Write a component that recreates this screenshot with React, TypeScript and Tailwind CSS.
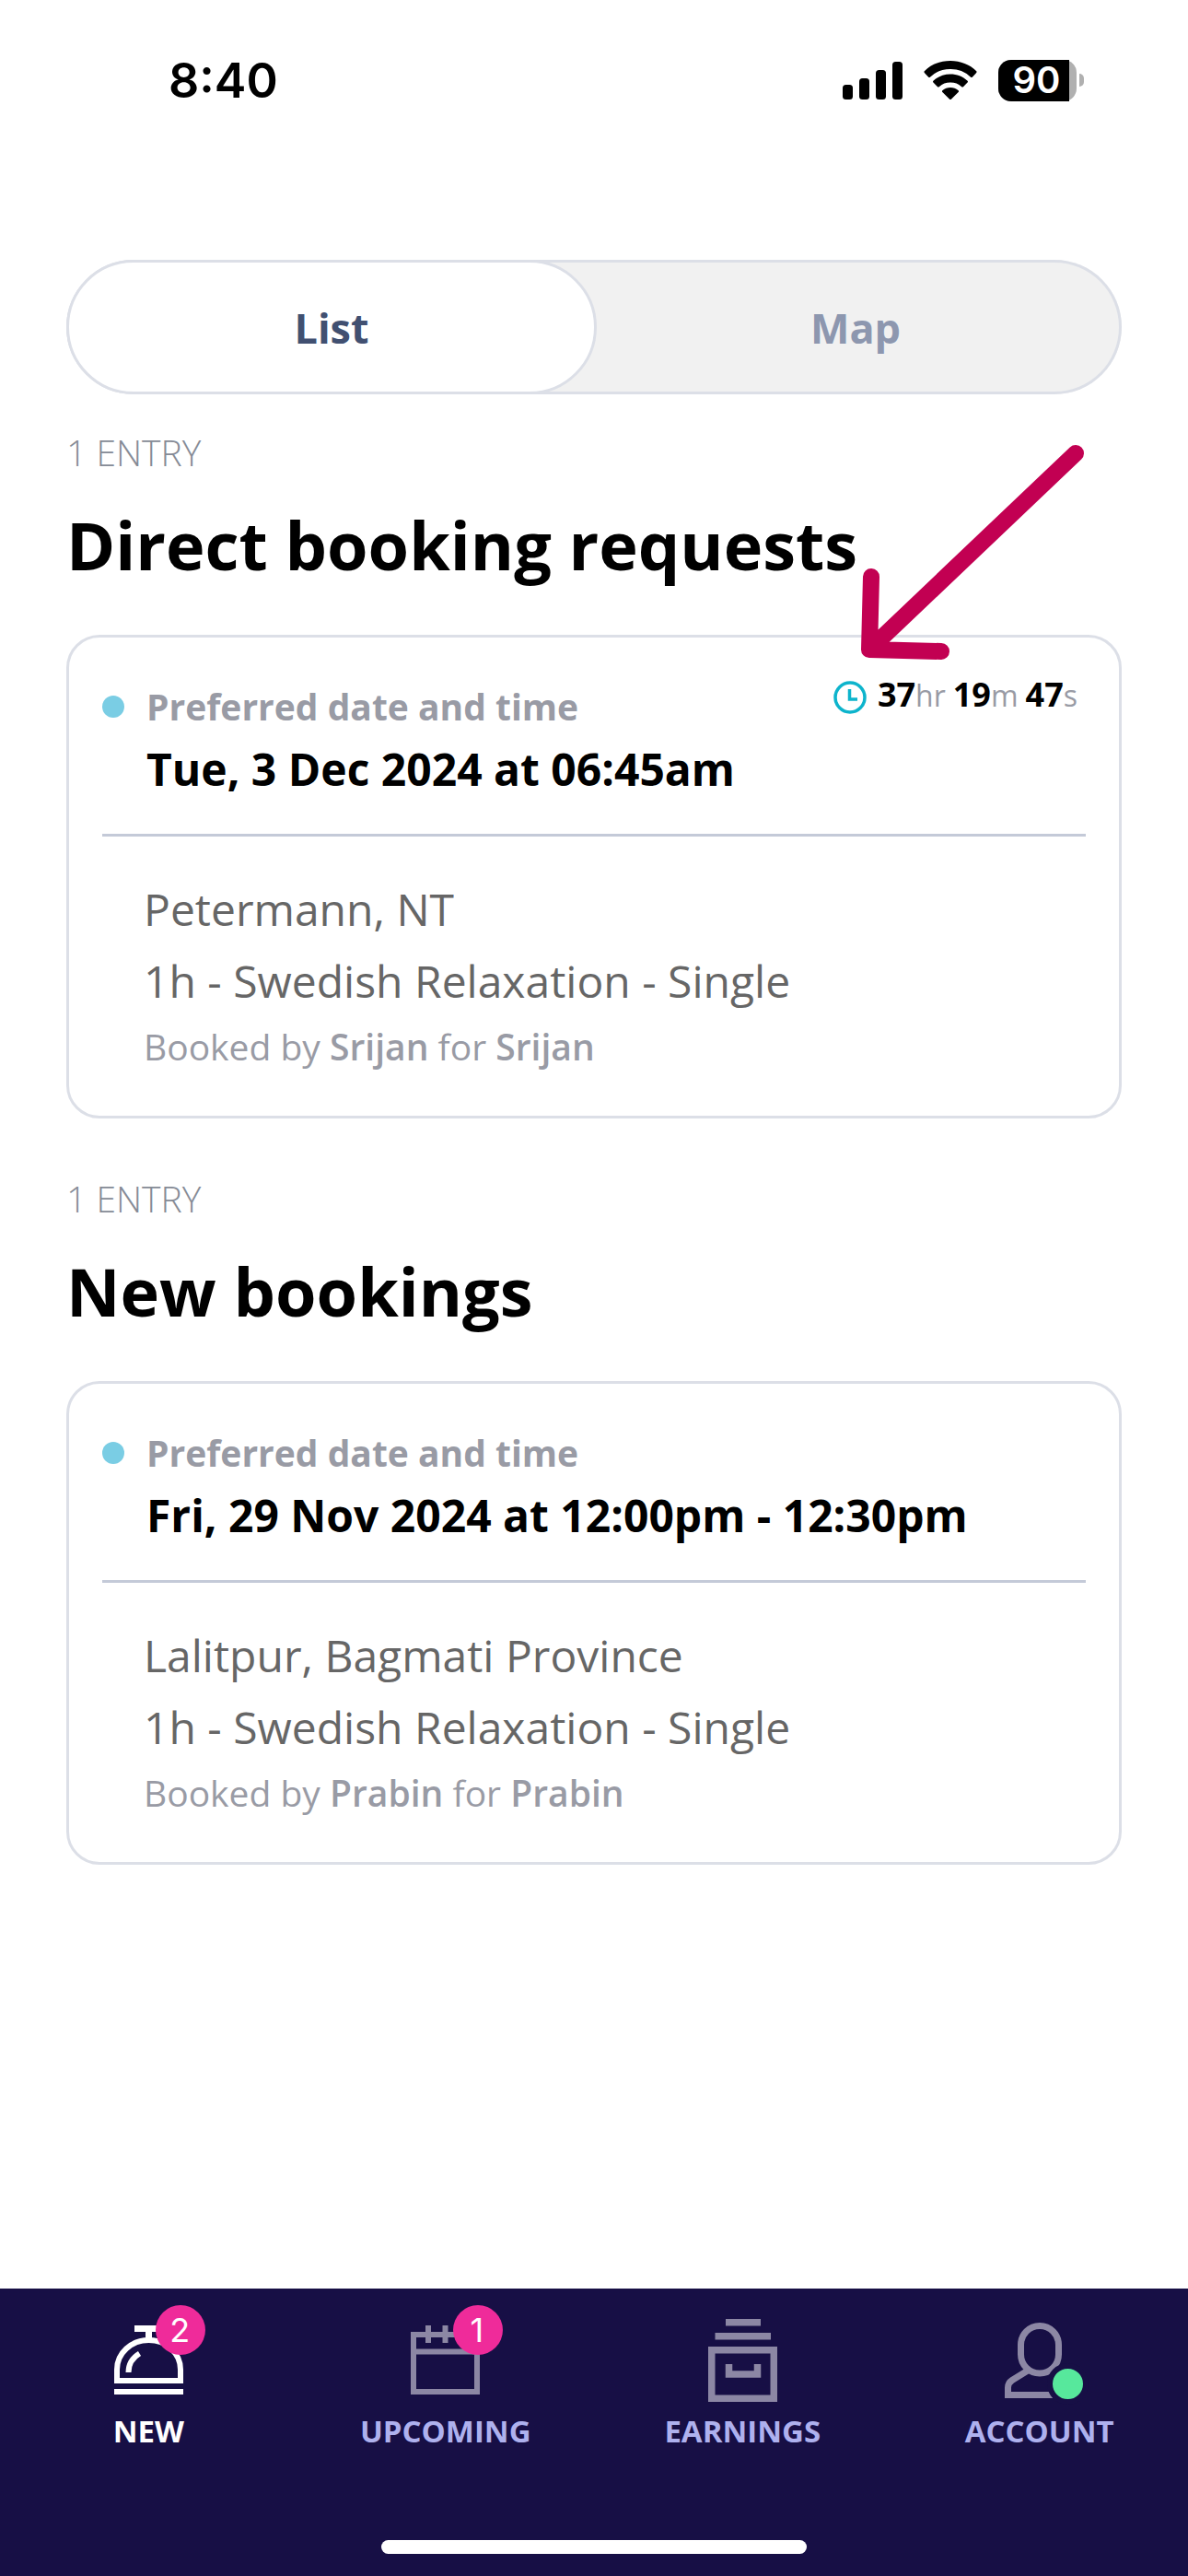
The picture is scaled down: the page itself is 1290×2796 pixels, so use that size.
import type { ReactNode } from "react";

const INK_MUTED = "text-[#999ba5]";

function StatusBar() {
  return (
    <header className="flex h-[180px] items-start justify-between pt-[55px] pr-[113px] pl-[183px]">
      <time className="font-['Inter'] text-[52px] leading-[66px] font-semibold">8:40</time>
      <div className="flex h-[64px] items-center gap-[23px]">
        <svg width="65" height="42" viewBox="0 0 65 42" aria-label="Signal">
          <rect x="0" y="26" width="11" height="16" rx="3.500" />
          <rect x="18" y="19" width="11" height="23" rx="3.500" />
          <rect x="36" y="10" width="11" height="32" rx="3.500" />
          <rect x="54" y="1" width="11" height="41" rx="3.500" />
        </svg>
        <svg width="58" height="42" viewBox="0 0 58 42" aria-label="Wi-Fi">
          <path d="M29 0C18 0 8 4 1 11a1.500 1.500 0 0 0 0 2.200l4 4.200a1.500 1.500 0 0 0 2.200 0A31.500 31.500 0 0 1 29 9a31.500 31.500 0 0 1 21.800 8.400a1.500 1.500 0 0 0 2.200 0l4-4.200a1.500 1.500 0 0 0 0-2.200C50 4 40 0 29 0Z" />
          <path d="M29 14.500c-7 0-13.500 2.600-18.300 7a1.500 1.500 0 0 0 0 2.300l4.100 4.100a1.500 1.500 0 0 0 2.200 0A18 18 0 0 1 29 23.500a18 18 0 0 1 12 4.400a1.500 1.500 0 0 0 2.200 0l4.100-4.100a1.500 1.500 0 0 0 0-2.300C42.500 17.100 36 14.500 29 14.500Z" />
          <path d="M29 29c-3.200 0-6.200 1.100-8.400 3a1.500 1.500 0 0 0 0 2.300l7.300 7.200a1.500 1.500 0 0 0 2.200 0l7.300-7.200a1.500 1.500 0 0 0 0-2.300C35.200 30.100 32.200 29 29 29Z" />
        </svg>
        <div className="flex items-center gap-[3px]">
          <div className="flex h-[45px] w-[85px] items-stretch rounded-[14px] bg-[#b0b0b0]">
            <span className="flex w-[77px] items-center justify-center rounded-l-[14px] bg-black pl-[6px] font-['Inter'] text-[40px] leading-[48px] font-semibold text-white">
              90
            </span>
          </div>
          <span className="h-[14px] w-[5px] rounded-r-full bg-[#b0b0b0]" />
        </div>
      </div>
    </header>
  );
}

function ViewToggle() {
  return (
    <div className="flex h-[146px] rounded-full bg-[#f1f1f1] text-[45px] font-bold ring-3 ring-[#dcdfe7] ring-inset">
      <button
        type="button"
        aria-pressed="true"
        className="flex-1 rounded-full border-3 border-[#dcdfe7] bg-white pt-[2px] text-[#415071]"
      >
        List
      </button>
      <button type="button" aria-pressed="false" className="flex-1 pt-[2px] text-[#8d97af]">
        <span className="pr-2">Map</span>
      </button>
    </div>
  );
}

function Unit({ value, unit }: { value: string; unit: string }) {
  return (
    <span className="flex items-baseline">
      <b className="text-black">{value}</b>
      <span className="text-[32px] font-medium">{unit}</span>
    </span>
  );
}

function Countdown() {
  return (
    <div className={`absolute top-[38px] right-[45px] flex items-center gap-3 text-[36px] leading-[48px] ${INK_MUTED}`}>
      <svg width="36" height="36" viewBox="0 0 36 36" fill="none" stroke="#0db4cc" className="mt-1">
        <circle cx="18" cy="18" r="16" strokeWidth="3.500" />
        <path d="M17.500 9v11H26" strokeWidth="3.500" />
      </svg>
      <div className="flex gap-2">
        <Unit value="37" unit="hr" />
        <Unit value="19" unit="m" />
        <Unit value="47" unit="s" />
      </div>
    </div>
  );
}

type Booking = { title: string; when: string; place: string; by: string; extra?: ReactNode };

function BookingSection({ title, when, place, by, extra }: Booking) {
  return (
    <section className="flex flex-col">
      <p className="text-[39px] leading-[54px] font-light text-[#868b96]">1 ENTRY</p>
      <h2 className="mt-[24px] text-[72px] leading-[98px] font-bold text-black">{title}</h2>
      <article className="relative mt-[49px] rounded-[36px] border-3 border-[#dcdfe7] bg-white px-9 pb-[43px]">
        <div className="flex gap-[24px] border-b-3 border-[#c4cad8] pt-[48px] pb-[35px]">
          <span className="mt-[15px] size-6 rounded-full bg-[#7acde4]" />
          <div>
            <p className={`text-[39px] leading-[54px] font-bold ${INK_MUTED}`}>Preferred date and time</p>
            <p className="mt-[6px] text-[48px] leading-[70px] font-bold text-black">{when}</p>
          </div>
        </div>
        <div className="pt-[40px] pl-[45px] text-[48px] leading-[78px] text-[#666666]">
          <p>{place}</p>
          <p>1h - Swedish Relaxation - Single</p>
          <p className={`text-[39px] leading-[64px] ${INK_MUTED}`}>
            Booked by <b className="font-semibold">{by}</b> for <b className="font-semibold">{by}</b>
          </p>
        </div>
        {extra}
      </article>
    </section>
  );
}

function PointerArrow() {
  return (
    <svg
      width="244"
      height="236"
      viewBox="0 0 244 236"
      fill="none"
      stroke="#c20052"
      strokeWidth="18"
      strokeLinecap="round"
      strokeLinejoin="round"
      className="pointer-events-none absolute right-9 bottom-full -mb-6"
    >
      <path d="M233 12L9 225M11 146L9 225L87 227" />
    </svg>
  );
}

function BellIcon() {
  return (
    <svg width="75" height="84" viewBox="0 0 75 84" fill="none" stroke="currentColor" strokeWidth="6">
      <path d="M22 6.500h31M37.500 6v12" strokeWidth="7" />
      <path d="M3 63V51C3 33 18.500 19 37.500 19S72 33 72 51V63Z" />
      <path d="M15.500 54c0-9 4.500-16 12-20.500" />
      <path d="M0 75h75" />
    </svg>
  );
}

function CalendarIcon() {
  return (
    <svg width="75" height="84" viewBox="0 0 75 84" fill="none" stroke="currentColor" strokeWidth="6">
      <path d="M3 13h69v62H3ZM3 31.500h69M19 3v19M37.500 3v19M56 3v19" />
    </svg>
  );
}

function DrawerIcon() {
  return (
    <svg width="75" height="92" viewBox="0 0 75 92" fill="none" stroke="currentColor" strokeWidth="7.500">
      <path d="M19 3.750h38M7.500 18.750h60.500M3.750 33.750h67.500v52.500H3.750ZM22.500 49v11H53.500V49" />
    </svg>
  );
}

function PersonIcon() {
  return (
    <svg width="75" height="84" viewBox="0 0 75 84" fill="none" stroke="currentColor" strokeWidth="7">
      <rect x="17.500" y="3.500" width="41" height="51.500" rx="20.500" />
      <path d="M25 52L8 62.500q-4.500 3-4.500 8v8H72V70.500q0-5-4.500-8L51 52" />
    </svg>
  );
}

function Badge({ children }: { children: ReactNode }) {
  return (
    <span className="absolute top-[18px] left-1/2 ml-2 flex size-[54px] items-center justify-center rounded-full bg-[#ef2b9a] pr-[2px] font-['Inter'] text-[36px] leading-none text-white">
      {children}
    </span>
  );
}

function Tab({ label, icon, active, children }: { label: string; icon: ReactNode; active?: boolean; children?: ReactNode }) {
  return (
    <a
      href="#"
      aria-current={active ? "page" : undefined}
      className={`relative flex flex-1 flex-col items-center ${active ? "text-white" : "text-[#aeb1ee]"}`}
    >
      <span className={`flex h-[132px] items-center pt-[26px] ${active ? "text-white" : "text-[#8c87a4]"}`}>{icon}</span>
      <span className="text-[33px] leading-[45px] font-bold">{label}</span>
      {children}
    </a>
  );
}

function TabBar() {
  return (
    <footer className="mt-auto flex h-[312px] flex-col justify-between bg-[#170f45] pb-6">
      <nav className="flex">
        <Tab label="NEW" icon={<BellIcon />} active>
          <Badge>2</Badge>
        </Tab>
        <Tab label="UPCOMING" icon={<CalendarIcon />}>
          <Badge>1</Badge>
        </Tab>
        <Tab label="EARNINGS" icon={<DrawerIcon />} />
        <Tab label="ACCOUNT" icon={<PersonIcon />}>
          <span className="absolute top-[81px] left-1/2 ml-2 size-[45px] rounded-full border-6 border-[#170f45] bg-[#57e89c]" />
        </Tab>
      </nav>
      <div className="h-[15px] w-[462px] self-center rounded-full bg-white" />
    </footer>
  );
}

export default function App() {
  return (
    <div className="flex min-h-screen flex-col bg-white font-['Open_Sans','Noto_Sans',sans-serif] text-black">
      <StatusBar />
      <main className="flex flex-col px-[72px] pt-[102px] pb-12">
        <ViewToggle />
        <div className="mt-9 flex flex-col gap-[60px]">
          <BookingSection
            title="Direct booking requests"
            when="Tue, 3 Dec 2024 at 06:45am"
            place="Petermann, NT"
            by="Srijan"
            extra={
              <>
                <Countdown />
                <PointerArrow />
              </>
            }
          />
          <BookingSection
            title="New bookings"
            when="Fri, 29 Nov 2024 at 12:00pm - 12:30pm"
            place="Lalitpur, Bagmati Province"
            by="Prabin"
          />
        </div>
      </main>
      <TabBar />
    </div>
  );
}
